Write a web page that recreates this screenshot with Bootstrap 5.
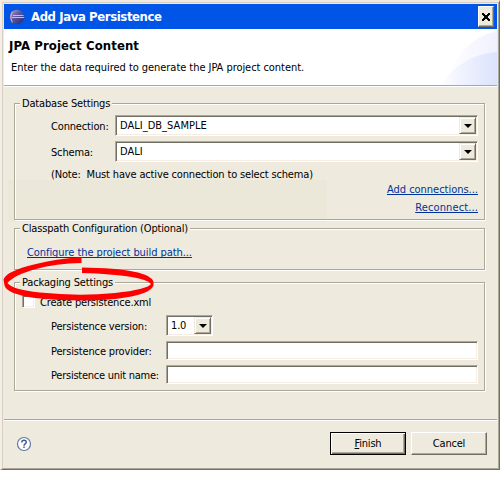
<!DOCTYPE html>
<html lang="en">
<head>
<meta charset="utf-8">
<title>Add Java Persistence</title>
<link href="https://cdn.jsdelivr.net/npm/bootstrap@5.3.0/dist/css/bootstrap.min.css" rel="stylesheet">
<style>
:root{--face:#eeeade;--shade:#aca899;--dark:#716f64}
body{background:#fff;color:#000;font:11px/14px "DejaVu Sans Condensed","DejaVu Sans",sans-serif;letter-spacing:-.16px;overflow:hidden}
body,.dialog *{white-space:nowrap}
.dialog{width:500px;height:470px;background:var(--face);border:solid;border-width:2px 1px 1px 2px;border-color:#f1e9e0 var(--dark) var(--dark) #f6ede6}
.frame{height:467px;padding:1px;border:1px solid;border-color:#d4d0c4 var(--shade) var(--shade) #d4d0c4}
.caption{height:25px;background:#0054e6;color:#fff;padding:0 2px 0 5px}
.caption b{font-size:13px;letter-spacing:-.4px;margin-left:6px}
.btn-x{width:16px;height:21px;background:var(--face);border:1px solid;border-color:#fff var(--dark) var(--dark) #fff;box-shadow:inset -1px -1px var(--shade);padding:0;margin-right:1px}
.banner{height:57px;background:#fff;border-bottom:1px solid var(--shade);box-shadow:0 1px #fff;padding:9px 0 0 5px}
.banner h1{font-size:13px;font-weight:700;line-height:16px;letter-spacing:.1px;margin:0 0 7px}
.banner p{letter-spacing:-.05px;margin:0 0 0 2px}
.banner svg{right:0;top:1px}
.content-area{height:333px;padding:17px 10px 0;background:linear-gradient(#ebe8d9,#ebe8d9) 4px 94px/319px 42px no-repeat}
.group{border:1px solid var(--shade);box-shadow:1px 1px #fff,inset 1px 1px #fff;width:471px}
.legend-text{display:table;line-height:14px;margin:-7px 0 0 5px;padding:0 2px;background:var(--face)}
.g-db{height:117px}.g-cp{height:42px;margin-top:8px}.g-pk{height:109px;margin-top:12px}
.field{padding-left:36px;padding-right:6px}
.field+.field{margin-top:5px}
.legend-text+.field{margin-top:4px}
.field label,.check label{padding-top:2px;margin-bottom:-1px}
.field label{height:16px}
.sunken{background:#fff;border:1px solid;border-color:var(--shade) #fff #fff var(--shade);box-shadow:inset 1px 1px var(--dark),inset -1px -1px #f6ece4}
.combo{height:21px;padding:2px 1px 2px 4px}
.combo-version{width:47px;height:21px}
.entry{height:19px}
.arrow{width:17px;height:17px;background:var(--face);border:1px solid;border-color:var(--face) var(--dark) var(--dark) var(--face);box-shadow:inset 1px 1px #fff,inset -1px -1px var(--shade)}
.arrow::after{content:"";border:solid transparent;border-width:4px 4px 0;border-top-color:#000;margin-top:1px}
.connection-value{letter-spacing:.02px}
.w-db{width:64px}.w-pk{width:115px}
.unit-label{letter-spacing:-.25px}
.note{padding-top:1px}
a,a:hover{color:#003399;text-decoration:underline;text-underline-offset:1px;text-decoration-thickness:1px;text-decoration-skip-ink:none;letter-spacing:-.02px}
.field.links{gap:4px;margin-top:1px}
.links a+a{letter-spacing:.12px}
.path-link{margin:10px 0 0 12px;letter-spacing:-.07px}
.check{margin:4px 0 0 7px;gap:5px}
.check+.field{margin-top:6px}
.box{width:13px;height:13px}
.footer-bar{border-top:1px solid var(--shade);box-shadow:inset 0 1px #fff;height:48px;padding:0 10px 0 12px;gap:5px}
.btn-win{width:76px;height:23px;padding:1px 0 0;border-radius:0;border:1px solid;border-color:#fff var(--dark) var(--dark) #fff;background:var(--face);box-shadow:inset -1px -1px var(--shade);font-size:11px;line-height:14px;letter-spacing:-.2px;color:#000}
.btn-default{border-color:#000;box-shadow:inset 1px 1px #fff,inset -1px -1px var(--dark),inset -2px -2px var(--shade)}
.marker{left:0;top:250px}
</style>
<script src="https://cdn.jsdelivr.net/npm/bootstrap@5.3.0/dist/js/bootstrap.bundle.min.js"></script>
</head>
<body>
<main class="dialog position-relative">
<div class="frame">
<header class="caption d-flex align-items-center">
<svg width="16" height="16" viewBox="0 0 16 16"><defs><linearGradient id="orb" x2="1" y2="1"><stop stop-color="#c5a9c8"/><stop offset=".4" stop-color="#5d5ca5"/><stop offset="1" stop-color="#25236c"/></linearGradient></defs><circle cx="8" cy="8" r="7.200" fill="url(#orb)"/><path d="M3.500 2.500Q.2 8 3.500 13.500" fill="none" stroke="#d6a7b2" stroke-width="1.200"/><path d="M4 6.500h10.500M3 8.500h12.200" stroke="#b3bfe6"/></svg>
<b>Add Java Persistence</b>
<button class="btn-x ms-auto d-flex align-items-center justify-content-center" aria-label="Close"><svg width="8" height="8" viewBox="0 0 8 8" shape-rendering="crispEdges"><path d="M0 0h2v1h1v1h2V1h1V0h2v2H7v1H6v2h1v1h1v2H6V7H5V6H3v1H2v1H0V6h1V5h1V3H1V2H0z"/></svg></button>
</header>
<section class="banner position-relative">
<svg class="position-absolute" width="66" height="55" viewBox="0 0 66 55"><defs><linearGradient id="haze"><stop stop-color="#fff"/><stop offset="1" stop-color="#eff1fe"/></linearGradient><linearGradient id="haze2"><stop stop-color="#fff"/><stop offset=".45" stop-color="#eef1fe"/><stop offset="1" stop-color="#dbe3fc"/></linearGradient></defs><path d="M16 56Q26 10 66 1v55z" fill="url(#haze)"/><path d="M8 56Q32 24 66 22v34z" fill="url(#haze2)"/></svg>
<h1>JPA Project Content</h1>
<p>Enter the data required to generate the JPA project content.</p>
</section>
<section class="content-area">
<div class="group g-db">
<div class="legend-text">Database Settings</div>
<div class="field d-flex align-items-center"><label class="w-db">Connection:</label><div class="sunken combo flex-fill d-flex align-items-center"><span class="connection-value me-auto">DALI_DB_SAMPLE</span><i class="arrow d-flex align-items-center justify-content-center"></i></div></div>
<div class="field d-flex align-items-center"><label class="w-db">Schema:</label><div class="sunken combo flex-fill d-flex align-items-center"><span class="connection-value me-auto">DALI</span><i class="arrow d-flex align-items-center justify-content-center"></i></div></div>
<div class="field note">(Note:&nbsp; Must have active connection to select schema)</div>
<div class="field links d-flex flex-column align-items-end"><a href="#">Add connections...</a><a href="#">Reconnect...</a></div>
</div>
<div class="group g-cp">
<div class="legend-text">Classpath Configuration (Optional)</div>
<a href="#" class="path-link d-inline-block">Configure the project build path...</a>
</div>
<div class="group g-pk">
<div class="legend-text">Packaging Settings</div>
<div class="check d-flex align-items-center"><span class="sunken box"></span><label>Create persistence.xml</label></div>
<div class="field d-flex align-items-center"><label class="w-pk">Persistence version:</label><div class="sunken combo combo-version d-flex align-items-center"><span class="me-auto">1.0</span><i class="arrow d-flex align-items-center justify-content-center"></i></div></div>
<div class="field d-flex align-items-center"><label class="w-pk">Persistence provider:</label><div class="sunken entry flex-fill"></div></div>
<div class="field d-flex align-items-center"><label class="w-pk unit-label">Persistence unit name:</label><div class="sunken entry flex-fill"></div></div>
</div>
</section>
<footer class="footer-bar d-flex align-items-center">
<svg width="16" height="16" viewBox="0 0 16 16"><circle cx="8" cy="8" r="6.500" fill="#fff" stroke="#6079a5" stroke-width="1.200"/><path d="M5.800 6.400Q5.800 4.300 8 4.300t2.300 1.900Q10.300 7.300 9.100 7.900 8 8.500 8 9.700M8 10.600v1.500" fill="none" stroke="#3d568c" stroke-width="1.400"/></svg>
<button class="btn btn-win btn-default ms-auto"><u>F</u>inish</button>
<button class="btn btn-win">Cancel</button>
</footer>
</div>
<svg class="marker position-absolute" width="160" height="52" viewBox="2 252 160 52" fill="#f00"><path d="M81.500 257Q55 259 36 264 6 271 3.500 279.500l1 6Q7 294 35 298 78 302.500 115 299 152 294.500 153.500 285v-3Q150 268.500 82 267.500v5.500Q144 275 151 284 147 289.500 115 293 78 296.500 40 292.500 12 289.500 7.500 283 14 275 36 269 56 263.500 81.500 263z"/></svg>
</main>
</body>
</html>
